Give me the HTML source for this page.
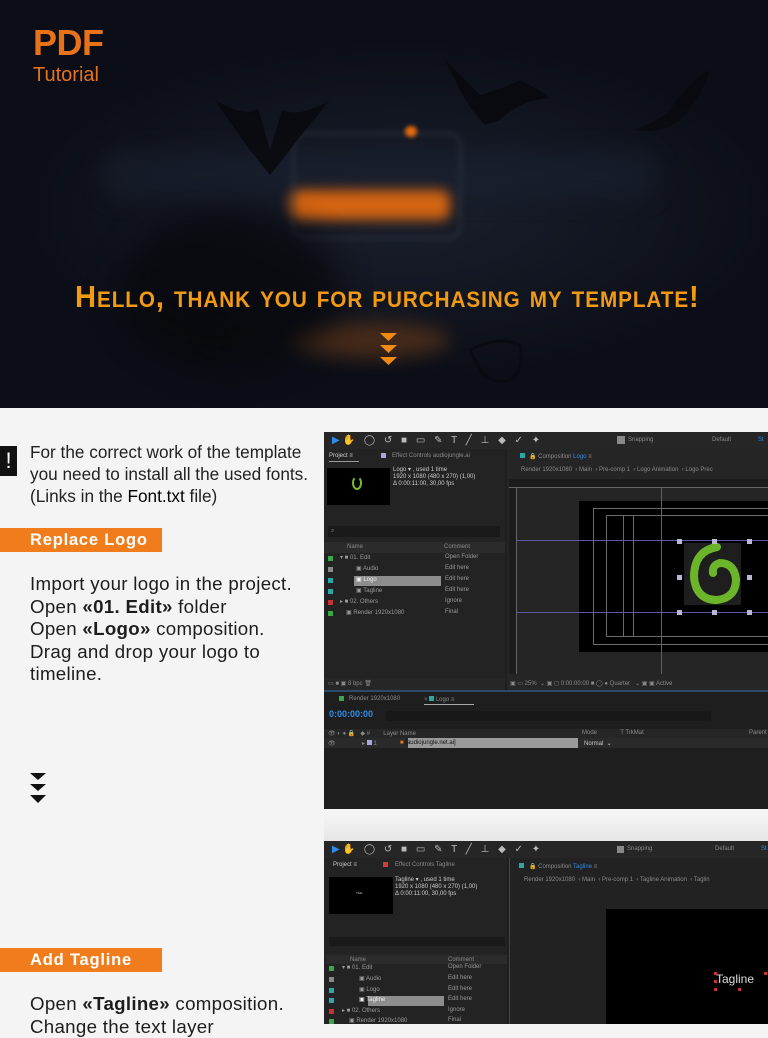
<!DOCTYPE html>
<html><head><meta charset="utf-8">
<style>
*{margin:0;padding:0;box-sizing:border-box}
body{width:768px;height:1024px;overflow:hidden;background:#f4f4f4;font-family:"Liberation Sans",sans-serif;position:relative}
.a{position:absolute}
.hero{left:0;top:0;width:768px;height:408px;background:radial-gradient(ellipse 380px 170px at 400px 210px,#1a1f2c 0%,#121621 55%,#0b0e16 100%);overflow:hidden}
.blur{filter:blur(6px)}
.t{font-size:6px;color:#8a8a8a;white-space:nowrap;font-family:"Liberation Sans",sans-serif}
.ae{background:#1f1f1f;overflow:hidden}
.p{font-size:17.2px;color:#222;line-height:22px}
.b{font-size:18.7px;color:#1d1d1d;line-height:22.5px;letter-spacing:.3px}
.lbl{left:0;width:162px;height:24px;background:#f07c1b;color:#fff;font-weight:bold;font-size:16.5px;letter-spacing:.8px;padding:3px 0 0 30px}
.row{position:absolute;height:10px;font-size:6px;color:#9a9a9a;white-space:nowrap}
.sq{position:absolute;width:5px;height:5px}
</style></head><body>

<div class="a hero">
  <div class="a blur" style="left:100px;top:150px;width:560px;height:50px;background:#1c2232;border-radius:30px;opacity:.5;filter:blur(10px)"></div>
  <div class="a" style="left:290px;top:190px;width:160px;height:30px;background:#e86c10;border-radius:10px;filter:blur(6px);opacity:.9"></div>
  <div class="a" style="left:292px;top:132px;width:170px;height:108px;border:3px solid #3e4352;border-radius:14px;opacity:.45;filter:blur(3px)"></div>
  <div class="a" style="left:405px;top:126px;width:12px;height:11px;background:#e86c10;border-radius:50%;filter:blur(2px)"></div>
  <div class="a" style="left:290px;top:322px;width:160px;height:36px;background:#6a3a18;border-radius:50%;opacity:.6;filter:blur(9px)"></div>
  <div class="a" style="left:120px;top:210px;width:220px;height:160px;background:#06070a;border-radius:50%;opacity:.7;filter:blur(16px)"></div>
  <svg class="a" style="left:0;top:0" width="768" height="408">
    <path d="M215 100 Q245 118 258 108 L270 150 L282 110 Q300 118 330 100 Q305 130 290 150 L270 175 L250 150 Q235 130 215 100Z" fill="#08090c" opacity=".8"/>
    <path d="M445 60 Q470 85 480 95 Q500 90 520 80 Q540 90 550 98 Q520 100 500 120 L485 125 Q470 110 460 90Z" fill="#08090c" opacity=".8"/>
    <path d="M635 130 Q660 120 670 110 Q690 80 710 70 Q700 100 680 120 Q660 135 635 130Z" fill="#08090c" opacity=".6"/>
    <path d="M470 350 Q500 335 520 345 Q525 370 510 380 Q490 385 480 370Z" fill="none" stroke="#07080b" stroke-width="3" opacity=".6"/>
    <path d="M190 320 Q215 305 225 315 Q230 345 215 360 Q195 355 190 340Z" fill="none" stroke="#07080b" stroke-width="3" opacity=".5"/>
  </svg>
  <div class="a" style="left:33px;top:22px;font-size:36px;font-weight:bold;color:#e8721a;letter-spacing:-.5px">PDF</div>
  <div class="a" style="left:33px;top:64px;font-size:20px;color:#e8721a">Tutorial</div>
  <div class="a" style="left:75px;top:279px;white-space:nowrap;font-size:31px;font-weight:bold;color:#f39a13;font-variant:small-caps;transform:scaleX(.94);transform-origin:left center;letter-spacing:1px">Hello, thank you for purchasing my template!</div>
  <svg class="a" style="left:380px;top:333px" width="18" height="32"><path d="M0 0H17L8.5 8Z M0 12H17L8.5 20Z M0 24H17L8.5 32Z" fill="#f08a14"/></svg>
</div>

<div class="a" style="left:0;top:446px;width:17px;height:30px;background:#111;color:#fff;font-size:22px;text-align:center;line-height:30px">!</div>
<div class="a p" style="left:30px;top:441px">For the correct work of the template<br>you need to install all the used fonts.<br>(Links in the <span style="color:#000">Font.txt</span> file)</div>
<div class="a lbl" style="top:528px">Replace Logo</div>
<div class="a b" style="left:30px;top:573px">Import your logo in the project.<br>Open <b>«01. Edit»</b> folder<br>Open <b>«Logo»</b> composition.<br>Drag and drop your logo to<br>timeline.</div>
<svg class="a" style="left:30px;top:773px" width="17" height="31"><path d="M0 0H16L8 7Z M0 11H16L8 18Z M0 22H16L8 30Z" fill="#111"/></svg>
<div class="a lbl" style="top:948px">Add Tagline</div>
<div class="a b" style="left:30px;top:993px">Open <b>«Tagline»</b> composition.<br>Change the text layer</div>

<div class="a ae" style="left:324px;top:432px;width:444px;height:377px">
  <div class="a" style="left:0;top:0;width:444px;height:17px;background:#262626"></div>
  <div class="a t" style="left:8px;top:3px;font-size:10px;color:#bbb;letter-spacing:3px"><span style="color:#2d8ceb">▶</span>✋ ◯ ↺ ■ ▭ ✎ T ╱ ⊥ ◆ ✓ ✦</div>
  <div class="a" style="left:293px;top:4px;width:8px;height:8px;background:#888"></div>
  <div class="a t" style="left:304px;top:5px">Snapping</div>
  <div class="a t" style="left:388px;top:5px">Default</div>
  <div class="a t" style="left:434px;top:5px;color:#2d8ceb">St</div>
  <div class="a" style="left:0;top:17px;width:181px;height:243px;background:#232323"></div>
  <div class="a t" style="left:5px;top:21px;color:#ccc">Project ≡</div>
  <div class="a" style="left:5px;top:29px;width:30px;height:1px;background:#999"></div>
  <div class="a" style="left:57px;top:21px;width:5px;height:5px;background:#a9a6e0"></div>
  <div class="a t" style="left:68px;top:21px">Effect Controls audiojungle.ai</div>
  <div class="a" style="left:3px;top:36px;width:63px;height:37px;background:#000"></div>
  <div class="a" style="left:28px;top:44px;width:10px;height:14px;border:2px solid #7cbb2a;border-radius:50%;border-top-color:transparent"></div>
  <div class="a t" style="left:69px;top:35px;color:#ccc;line-height:7px">Logo ▾ , used 1 time<br>1920 x 1080 (480 x 270) (1,00)<br>Δ 0:00:11:00, 30,00 fps</div>
  <div class="a" style="left:4px;top:94px;width:172px;height:11px;background:#1a1a1a"></div>
  <div class="a t" style="left:7px;top:96px">⌕</div>
  <div class="a" style="left:0;top:110px;width:181px;height:11px;background:#2b2b2b"></div>
  <div class="a t" style="left:23px;top:112px">Name</div><div class="a t" style="left:120px;top:112px">Comment</div>
  <div class="row" style="left:0;top:122px;width:181px"><span class="sq" style="left:4px;top:2px;background:#3aa84a"></span><span style="position:absolute;left:16px">▾ ■ 01. Edit</span><span style="position:absolute;left:121px">Open Folder</span></div>
  <div class="row" style="left:0;top:133px;width:181px"><span class="sq" style="left:4px;top:2px;background:#888"></span><span style="position:absolute;left:32px">▣ Audio</span><span style="position:absolute;left:121px">Edit here</span></div>
  <div class="row" style="left:0;top:144px;width:181px"><span class="sq" style="left:4px;top:2px;background:#2aa8a8"></span><span style="position:absolute;left:30px;width:87px;height:10px;background:#8d8d8d"></span><span style="position:absolute;left:32px;color:#eee">▣ Logo</span><span style="position:absolute;left:121px">Edit here</span></div>
  <div class="row" style="left:0;top:155px;width:181px"><span class="sq" style="left:4px;top:2px;background:#2aa8a8"></span><span style="position:absolute;left:32px">▣ Tagline</span><span style="position:absolute;left:121px">Edit here</span></div>
  <div class="row" style="left:0;top:166px;width:181px"><span class="sq" style="left:4px;top:2px;background:#c83232"></span><span style="position:absolute;left:16px">▸ ■ 02. Others</span><span style="position:absolute;left:121px">Ignore</span></div>
  <div class="row" style="left:0;top:177px;width:181px"><span class="sq" style="left:4px;top:2px;background:#3aa84a"></span><span style="position:absolute;left:22px">▣ Render 1920x1080</span><span style="position:absolute;left:121px">Final</span></div>
  <div class="a" style="left:0;top:246px;width:181px;height:12px;background:#262626"></div>
  <div class="a t" style="left:4px;top:248px">▭ ■ ▣ 8 bpc 🗑</div>
  <div class="a" style="left:183px;top:17px;width:261px;height:243px;background:#252525"></div>
  <div class="a" style="left:196px;top:21px;width:5px;height:5px;background:#2aa8a8"></div>
  <div class="a t" style="left:205px;top:21px">🔒 Composition <span style="color:#2d8ceb">Logo</span> ≡</div>
  <div class="a t" style="left:197px;top:35px">Render 1920x1080 &nbsp;‹ Main &nbsp;‹ Pre-comp 1 &nbsp;‹ Logo Animation &nbsp;‹ Logo Prec</div>
  <div class="a" style="left:185px;top:47px;width:259px;height:9px;background:#1c1c1c;border-bottom:1px solid #666"></div>
  <div class="a" style="left:185px;top:56px;width:8px;height:186px;background:#1c1c1c;border-right:1px solid #666"></div>
  <div class="a" style="left:255px;top:69px;width:189px;height:151px;background:#000"></div>
  <div class="a" style="left:269px;top:76px;width:180px;height:137px;border:1px solid #6a6a6a"></div>
  <div class="a" style="left:282px;top:83px;width:170px;height:122px;border:1px solid #6a6a6a"></div>
  <div class="a" style="left:299px;top:83px;width:1px;height:122px;background:#6a6a6a"></div>
  <div class="a" style="left:309px;top:83px;width:1px;height:122px;background:#6a6a6a"></div>
  <div class="a" style="left:193px;top:108px;width:251px;height:1px;background:#5a5aa0"></div>
  <div class="a" style="left:193px;top:180px;width:251px;height:1px;background:#5a5aa0"></div>
  <div class="a" style="left:337px;top:56px;width:1px;height:186px;background:#5a5aa0"></div>
  <div class="a" style="left:360px;top:111px;width:57px;height:62px;background:#1e1e1e"></div>
  <svg class="a" style="left:360px;top:111px" width="57" height="62"><path d="M33 4 Q10 8 10 34 Q12 57 33 57 Q52 55 52 36 Q50 20 36 20 Q28 22 29 30" fill="none" stroke="#6cb52a" stroke-width="8" stroke-linecap="round"/></svg>
  <div class="a" style="left:353px;top:107px;width:5px;height:5px;background:#b8b8d8;box-shadow:35px 0 #b8b8d8,70px 0 #b8b8d8,0 36px #b8b8d8,70px 36px #b8b8d8,0 71px #b8b8d8,35px 71px #b8b8d8,70px 71px #b8b8d8"></div>
  <div class="a" style="left:183px;top:244px;width:261px;height:14px;background:#262626"></div>
  <div class="a t" style="left:186px;top:248px">▣ ▭ 25% &nbsp;⌄ ▣ ◻ 0:00:00:00 ■ ◯ ● Quarter &nbsp; ⌄ ▣ ▣ Active</div>
  <div class="a" style="left:0;top:258px;width:444px;height:2px;background:#2b4a6a"></div>
  <div class="a" style="left:0;top:260px;width:444px;height:117px;background:#1e1e1e"></div>
  <div class="a" style="left:15px;top:264px;width:5px;height:5px;background:#3aa84a"></div>
  <div class="a t" style="left:25px;top:264px">Render 1920x1080</div>
  <div class="a t" style="left:100px;top:264px">× <span style="display:inline-block;width:5px;height:5px;background:#2aa8a8"></span> Logo ≡</div>
  <div class="a" style="left:100px;top:272px;width:50px;height:1px;background:#aaa"></div>
  <div class="a" style="left:5px;top:277px;font-size:9px;font-weight:bold;color:#2d8ceb;white-space:nowrap">0:00:00:00</div>
  <div class="a" style="left:62px;top:279px;width:325px;height:10px;background:#181818"></div>
  <div class="a" style="left:0;top:297px;width:444px;height:9px;background:#262626"></div>
  <div class="a t" style="left:4px;top:298px">👁 ◐ ● 🔒 &nbsp; ◆ # &nbsp;&nbsp;&nbsp;&nbsp;&nbsp;&nbsp; Layer Name</div>
  <div class="a t" style="left:258px;top:298px">Mode &nbsp;&nbsp;&nbsp;&nbsp;&nbsp;&nbsp;&nbsp;&nbsp;&nbsp;&nbsp;&nbsp;&nbsp; T TrkMat</div>
  <div class="a t" style="left:425px;top:298px">Parent</div>
  <div class="a" style="left:0;top:306px;width:444px;height:10px;background:#2a2a2a"></div>
  <div class="a" style="left:84px;top:306px;width:170px;height:10px;background:#9a9a9a"></div>
  <div class="a t" style="left:4px;top:308px">👁</div>
  <div class="a t" style="left:38px;top:308px">▸ <span style="display:inline-block;width:5px;height:5px;background:#a9a6e0"></span> 1</div>
  <div class="a t" style="left:76px;top:308px"><span style="color:#e87a1a">■</span> <span style="color:#111">[audiojungle.net.ai]</span></div>
  <div class="a t" style="left:260px;top:308px;color:#ccc">Normal &nbsp;⌄</div>
</div>

<div class="a" style="left:324px;top:814px;width:444px;height:28px;background:linear-gradient(#f4f4f4,#e6e6e6)"></div>
<div class="a ae" style="left:324px;top:841px;width:444px;height:183px">
  <div class="a" style="left:0;top:0;width:444px;height:17px;background:#262626"></div>
  <div class="a t" style="left:8px;top:3px;font-size:10px;color:#bbb;letter-spacing:3px"><span style="color:#2d8ceb">▶</span>✋ ◯ ↺ ■ ▭ ✎ T ╱ ⊥ ◆ ✓ ✦</div>
  <div class="a" style="left:293px;top:5px;width:7px;height:7px;background:#888"></div>
  <div class="a t" style="left:303px;top:5px">Snapping</div>
  <div class="a t" style="left:391px;top:5px">Default</div>
  <div class="a t" style="left:437px;top:5px;color:#2d8ceb">St</div>
  <div class="a" style="left:0;top:17px;width:183px;height:166px;background:#232323"></div>
  <div class="a t" style="left:9px;top:21px;color:#ccc">Project ≡</div>
  <div class="a" style="left:59px;top:21px;width:5px;height:5px;background:#d43a3a"></div>
  <div class="a t" style="left:71px;top:21px">Effect Controls Tagline</div>
  <div class="a" style="left:5px;top:36px;width:64px;height:37px;background:#000"></div>
  <div class="a t" style="left:32px;top:49px;color:#ccc;font-size:4px">ᴛᴀɢ.</div>
  <div class="a t" style="left:71px;top:36px;color:#ccc;line-height:7px">Tagline ▾ , used 1 time<br>1920 x 1080 (480 x 270) (1,00)<br>Δ 0:00:11:00, 30,00 fps</div>
  <div class="a" style="left:5px;top:96px;width:176px;height:9px;background:#1a1a1a"></div>
  <div class="a" style="left:2px;top:114px;width:181px;height:9px;background:#2b2b2b"></div>
  <div class="a t" style="left:26px;top:116px">Name</div><div class="a t" style="left:124px;top:116px">Comment</div>
  <div class="row" style="left:0;top:123px;width:183px"><span class="sq" style="left:5px;top:2px;background:#3aa84a"></span><span style="position:absolute;left:18px">▾ ■ 01. Edit</span><span style="position:absolute;left:124px">Open Folder</span></div>
  <div class="row" style="left:0;top:134px;width:183px"><span class="sq" style="left:5px;top:2px;background:#888"></span><span style="position:absolute;left:35px">▣ Audio</span><span style="position:absolute;left:124px">Edit here</span></div>
  <div class="row" style="left:0;top:145px;width:183px"><span class="sq" style="left:5px;top:2px;background:#2aa8a8"></span><span style="position:absolute;left:35px">▣ Logo</span><span style="position:absolute;left:124px">Edit here</span></div>
  <div class="row" style="left:0;top:155px;width:183px"><span class="sq" style="left:5px;top:2px;background:#2aa8a8"></span><span style="position:absolute;left:44px;width:76px;height:10px;background:#8d8d8d"></span><span style="position:absolute;left:35px;color:#eee">▣ Tagline</span><span style="position:absolute;left:124px">Edit here</span></div>
  <div class="row" style="left:0;top:166px;width:183px"><span class="sq" style="left:5px;top:2px;background:#c83232"></span><span style="position:absolute;left:18px">▸ ■ 02. Others</span><span style="position:absolute;left:124px">Ignore</span></div>
  <div class="row" style="left:0;top:176px;width:183px"><span class="sq" style="left:5px;top:2px;background:#3aa84a"></span><span style="position:absolute;left:25px">▣ Render 1920x1080</span><span style="position:absolute;left:124px">Final</span></div>
  <div class="a" style="left:185px;top:17px;width:259px;height:166px;background:#222;border-left:1px solid #2b4a6a"></div>
  <div class="a" style="left:195px;top:22px;width:5px;height:5px;background:#2aa8a8"></div>
  <div class="a t" style="left:205px;top:22px">🔒 Composition <span style="color:#2d8ceb">Tagline</span> ≡</div>
  <div class="a t" style="left:200px;top:36px">Render 1920x1080 &nbsp;‹ Main &nbsp;‹ Pre-comp 1 &nbsp;‹ Tagline Animation &nbsp;‹ Taglin</div>
  <div class="a" style="left:282px;top:68px;width:162px;height:115px;background:#000"></div>
  <div class="a" style="left:392px;top:131px;font-size:12px;color:#ddd">Tagline</div>
  <div class="a" style="left:390px;top:131px;width:3px;height:3px;background:#c33;box-shadow:0 8px #c33,0 16px #c33,24px 16px #c33,50px 0 #c33"></div>
</div>
</body></html>
